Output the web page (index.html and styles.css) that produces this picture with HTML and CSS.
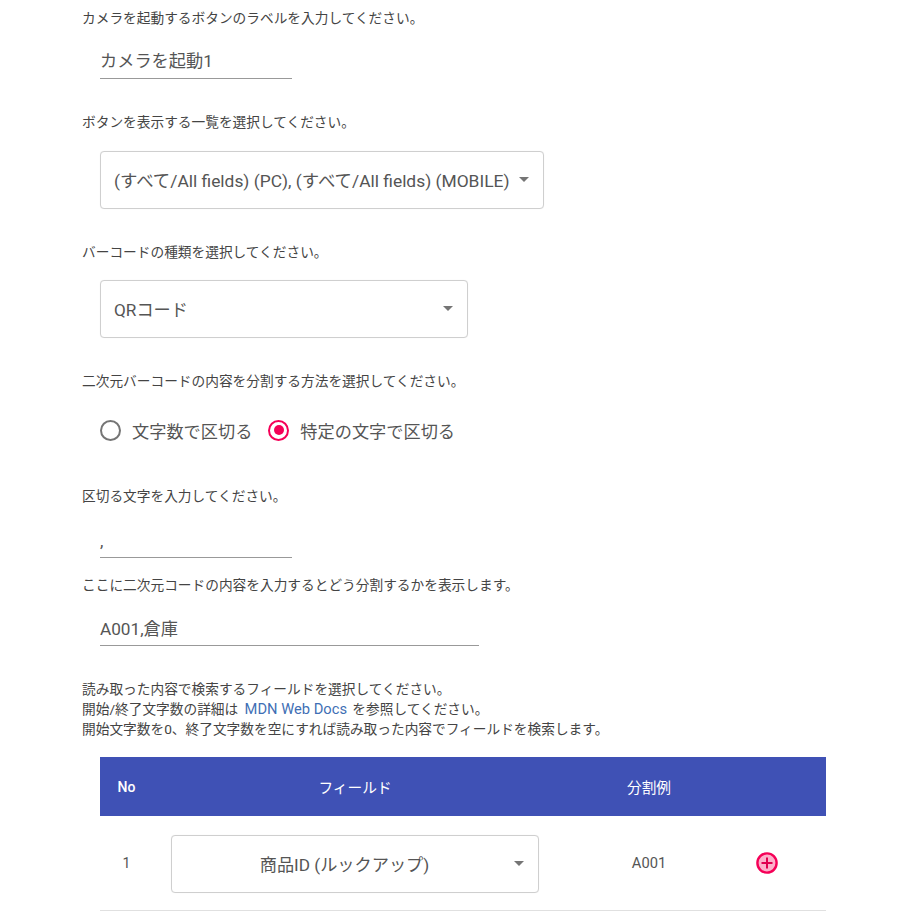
FILE: index.html
```html
<!DOCTYPE html>
<html lang="ja">
<head>
  <meta charset="UTF-8"/>
  <meta name="viewport" content="width=device-width, initial-scale=1.0"/>
  <title>カメラ設定</title>
  <link rel="stylesheet" href="styles.css">
</head>
<body>
  <div class="container">
    <p class="desc first">カメラを起動するボタンのラベルを入力してください。</p>
    <div class="field label-field"><span>カメラを起動1</span></div>

    <p class="desc list-desc">ボタンを表示する一覧を選択してください。</p>
    <div class="select list-select">
      <span>(すべて/All fields) (PC), (すべて/All fields) (MOBILE)</span>
      <i class="arrow"></i>
    </div>

    <p class="desc type-desc">バーコードの種類を選択してください。</p>
    <div class="select type-select">
      <span>QRコード</span>
      <i class="arrow"></i>
    </div>

    <p class="desc split-desc">二次元バーコードの内容を分割する方法を選択してください。</p>
    <div class="radios">
      <div class="radio"><i class="mark"></i><span>文字数で区切る</span></div>
      <div class="radio on"><i class="mark"></i><span>特定の文字で区切る</span></div>
    </div>

    <p class="desc sep-desc">区切る文字を入力してください。</p>
    <div class="field sep-field"><span>,</span></div>

    <p class="desc sample-desc">ここに二次元コードの内容を入力するとどう分割するかを表示します。</p>
    <div class="field sample-field"><span>A001,倉庫</span></div>

    <p class="desc search-desc">読み取った内容で検索するフィールドを選択してください。<br>開始/終了文字数の詳細は <a href="#">MDN Web Docs</a> を参照してください。<br>開始文字数を0、終了文字数を空にすれば読み取った内容でフィールドを検索します。</p>

    <table class="fields">
      <tr><th class="c-no">No</th><th class="c-field">フィールド</th><th class="c-ex">分割例</th><th class="c-add"></th></tr>
      <tr>
        <td class="c-no">1</td>
        <td class="c-field">
          <div class="select row-select"><span>商品ID (ルックアップ)</span><i class="arrow"></i></div>
        </td>
        <td class="c-ex">A001</td>
        <td class="c-add">
          <svg width="24" height="24" viewBox="0 0 24 24"><circle cx="12" cy="12" r="9.6" fill="#fdb0cb" stroke="#f50057" stroke-width="2.4"/><path d="M12 6.5v11M6.5 12h11" stroke="#e0004f" stroke-width="2"/></svg>
        </td>
      </tr>
    </table>
  </div>
</body>
</html>
```

FILE: styles.css
```css
html, body { margin:0; height:920px; overflow:hidden; background:#fff; }
body { font-family:Roboto,"Noto Sans CJK JP",sans-serif; color:rgba(0,0,0,0.87); }
.container { padding-left:82px; width:744px; }
p { margin:0; }
.desc { font-size:13.7px; line-height:20px; color:#444; }
.first { padding-top:8px; }
.list-desc { margin-top:33px; }
.type-desc { margin-top:33px; }
.split-desc { margin-top:33px; }
.sep-desc { margin-top:36px; }
.sample-desc { margin-top:17px; }
.search-desc { margin-top:33px; }
.search-desc a { color:#3f6fb5; text-decoration:none; font-size:14.7px; margin:0 2px 0 3px; }

.field { margin-left:18px; border-bottom:1px solid #999; font-size:17.2px; color:#555; box-sizing:border-box; display:flex; align-items:flex-end; padding-bottom:6px; }
.label-field { width:192px; height:41px; margin-top:10px; }
.sep-field { width:192px; height:42px; margin-top:10px; }
.sample-field { width:379px; height:41px; margin-top:10px; padding-bottom:5px; }

.select { display:flex; align-items:center; justify-content:space-between; box-sizing:border-box; height:58px; border:1px solid #cfcfcf; border-radius:4px; font-size:17.2px; color:#555; padding:0 14px 2px 13px; background:#fff; box-shadow:0 0 1px rgba(0,0,0,0.08); }
.list-select { margin:19px 0 0 18px; width:444px; font-size:17.4px; }
.type-select { margin:18px 0 0 18px; width:368px; }
.arrow { flex:none; width:0; height:0; border-left:5px solid transparent; border-right:5px solid transparent; border-top:5px solid #757575; }

.radios { display:flex; margin:19px 0 0 18px; height:40px; align-items:center; gap:16px; }
.radio { display:flex; align-items:center; gap:11px; font-size:17.2px; color:#555; }
.mark { box-sizing:border-box; width:21px; height:21px; border:2px solid #757575; border-radius:50%; position:relative; }
.radio.on .mark { border-color:#f50057; }
.radio.on .mark::after { content:""; position:absolute; left:3.5px; top:3.5px; width:10px; height:10px; border-radius:50%; background:#f50057; }

.fields { margin:18px 0 0 18px; width:726px; border-collapse:collapse; table-layout:fixed; font-size:14.7px; color:#555; }
.fields th { background:#3f51b5; color:#fff; height:59px; padding:0; font-weight:400; font-size:14.7px; }
.fields th.c-no { font-weight:500; font-size:14px; }
.fields th.c-field { padding-left:18px; }
.fields td { height:94px; padding:0; border-bottom:1px solid #e0e0e0; text-align:center; }
.fields td.c-no { font-size:14px; }
.c-no { width:53px; }
.c-field { width:386px; box-sizing:border-box; }
.fields .c-ex { width:216px; box-sizing:border-box; padding-left:4px; }
.c-add svg { display:block; }
.row-select { width:368px; margin:2px 0 0 18px; }
.row-select span { flex:1; text-align:center; padding-right:10px; }
```
